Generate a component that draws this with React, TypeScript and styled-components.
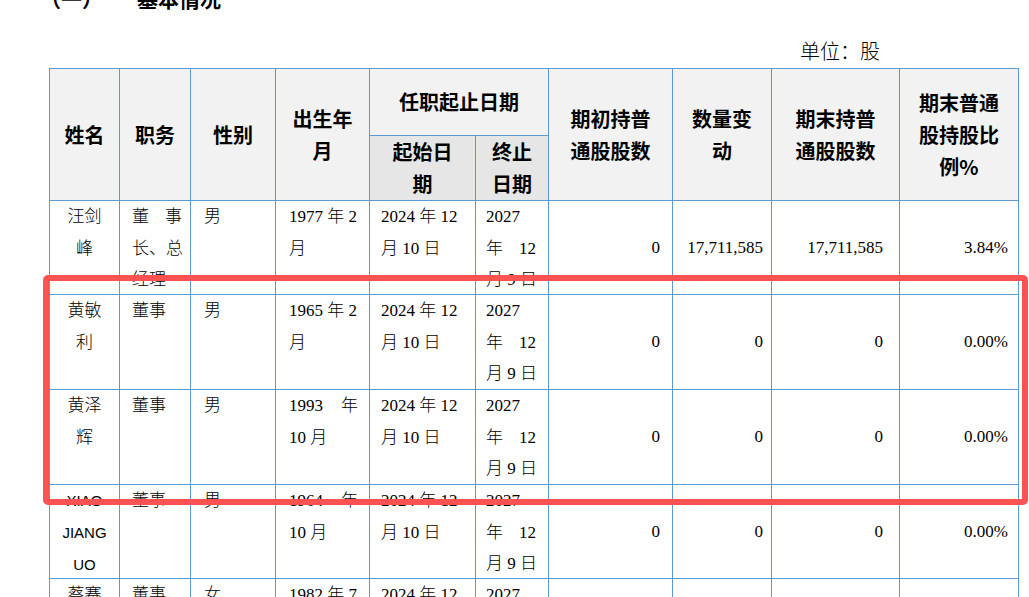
import React from "react";
import styled, { createGlobalStyle } from "styled-components";

const GlobalStyle = createGlobalStyle`
  html, body { margin: 0; padding: 0; background: #fff; }
  body {
    font-family: "Liberation Serif", "Noto Sans CJK SC", serif;
    color: #000;
    overflow: hidden;
  }
`;

const Page = styled.div`
  position: relative;
  width: 1029px;
  height: 597px;
  overflow: hidden;
`;

const Heading = styled.h2`
  margin: -17px 0 0 0;
  padding-left: 40px;
  height: 30px;
  display: flex;
  gap: 34px;
  font: 700 21px/30px "Noto Sans CJK SC", sans-serif;
`;

const Unit = styled.div`
  margin-top: 24px;
  height: 30px;
  padding-right: 149px;
  text-align: right;
  font: 300 20px/30px "Liberation Serif", "Noto Sans CJK SC", serif;
`;

const TableWrap = styled.div`
  padding-left: 49px;
  margin-top: 1px;
`;

const Table = styled.table`
  border-collapse: collapse;
  table-layout: fixed;
  width: 969px;
`;

const HeadCell = styled.th<{ $shade?: boolean }>`
  border: 1px solid #5b9bd5;
  background: ${(p) => (p.$shade ? "#e6e6e6" : "#f2f2f2")};
  font: 700 20px/32px "Noto Sans CJK SC", sans-serif;
  text-align: center;
  vertical-align: middle;
  padding: 0;
`;

const HeadRow = styled.tr<{ $h: number }>`
  height: ${(p) => p.$h}px;
`;

const BodyRow = styled.tr<{ $h: number }>`
  height: ${(p) => p.$h}px;
`;

const BodyCell = styled.td<{
  $align: "left" | "center" | "right";
  $valign: "top" | "middle";
  $pl: number;
  $pr: number;
}>`
  border: 1px solid #5b9bd5;
  padding: 0 ${(p) => p.$pr}px 0 ${(p) => p.$pl}px;
  font: 300 17px/31.5px "Liberation Serif", "Noto Sans CJK SC", serif;
  text-align: ${(p) => p.$align};
  vertical-align: ${(p) => p.$valign};
  white-space: nowrap;
  overflow: hidden;
`;

const CellBox = styled.div<{ $max: number }>`
  max-height: ${(p) => p.$max}px;
  overflow: hidden;
`;

const Line = styled.div`
  white-space: nowrap;
`;

const JustifyLine = styled.div`
  display: flex;
  justify-content: space-between;
  white-space: nowrap;
`;

const Latin = styled.div`
  font: 400 15px/32px "Liberation Sans", sans-serif;
`;

const Highlight = styled.div`
  position: absolute;
  left: 43px;
  top: 275px;
  width: 985px;
  height: 230px;
  box-sizing: border-box;
  border: 6px solid #fc5252;
  border-radius: 5px;
  pointer-events: none;
`;

type L = string | { t: string; j: true };
const J = (t: string): L => ({ t, j: true });

type Row = {
  h: number;
  name: L[];
  latin?: boolean;
  duty: L[];
  sex: string;
  birth: L[];
  start: L[];
  end: L[];
  a: string;
  b: string;
  c: string;
  d: string;
};

const endDate: L[] = ["2027", J("年 12"), "月 9 日"];
const startDate: L[] = ["2024 年 12", "月 10 日"];

const rows: Row[] = [
  {
    h: 94,
    name: ["汪剑", "峰"],
    duty: [J("董 事"), J("长 、 总"), "经理"],
    sex: "男",
    birth: ["1977 年 2", "月"],
    start: startDate,
    end: endDate,
    a: "0",
    b: "17,711,585",
    c: "17,711,585",
    d: "3.84%",
  },
  {
    h: 95,
    name: ["黄敏", "利"],
    duty: ["董事"],
    sex: "男",
    birth: ["1965 年 2", "月"],
    start: startDate,
    end: endDate,
    a: "0",
    b: "0",
    c: "0",
    d: "0.00%",
  },
  {
    h: 95,
    name: ["黄泽", "辉"],
    duty: ["董事"],
    sex: "男",
    birth: [J("1993 年"), "10 月"],
    start: startDate,
    end: endDate,
    a: "0",
    b: "0",
    c: "0",
    d: "0.00%",
  },
  {
    h: 94,
    name: ["XIAO", "JIANG", "UO"],
    latin: true,
    duty: ["董事"],
    sex: "男",
    birth: [J("1964 年"), "10 月"],
    start: startDate,
    end: endDate,
    a: "0",
    b: "0",
    c: "0",
    d: "0.00%",
  },
  {
    h: 95,
    name: ["蔡赛", "男"],
    duty: ["董事、", "副总"],
    sex: "女",
    birth: ["1982 年 7", "月"],
    start: startDate,
    end: endDate,
    a: "0",
    b: "0",
    c: "0",
    d: "0.00%",
  },
];

const Lines: React.FC<{ lines: L[]; latin?: boolean; max: number }> = ({ lines, latin, max }) => (
  <CellBox $max={max}>
    {lines.map((l, i) =>
      typeof l === "string" ? (
        latin ? (
          <Latin key={i}>{l}</Latin>
        ) : (
          <Line key={i}>{l}</Line>
        )
      ) : (
        <JustifyLine key={i}>
          {l.t.split(" ").map((w, k) => (
            <span key={k}>{w}</span>
          ))}
        </JustifyLine>
      )
    )}
  </CellBox>
);

const widths = [70, 71, 85, 94, 106, 73, 124, 99, 128, 119];

export default function App() {
  return (
    <Page>
      <GlobalStyle />
      <Heading>
        <span>（一）</span>
        <span>基本情况</span>
      </Heading>
      <Unit>单位：股</Unit>
      <TableWrap>
        <Table>
          <colgroup>
            {widths.map((w, i) => (
              <col key={i} style={{ width: w }} />
            ))}
          </colgroup>
          <thead>
            <HeadRow $h={67}>
              <HeadCell rowSpan={2}>姓名</HeadCell>
              <HeadCell rowSpan={2}>职务</HeadCell>
              <HeadCell rowSpan={2}>性别</HeadCell>
              <HeadCell rowSpan={2}>
                出生年
                <br />月
              </HeadCell>
              <HeadCell colSpan={2}>任职起止日期</HeadCell>
              <HeadCell rowSpan={2}>
                期初持普
                <br />
                通股股数
              </HeadCell>
              <HeadCell rowSpan={2}>
                数量变
                <br />动
              </HeadCell>
              <HeadCell rowSpan={2}>
                期末持普
                <br />
                通股股数
              </HeadCell>
              <HeadCell rowSpan={2}>
                期末普通
                <br />
                股持股比
                <br />
                例%
              </HeadCell>
            </HeadRow>
            <HeadRow $h={63}>
              <HeadCell $shade>
                起始日
                <br />期
              </HeadCell>
              <HeadCell $shade>
                终止
                <br />
                日期
              </HeadCell>
            </HeadRow>
          </thead>
          <tbody>
            {rows.map((r, i) => {
              const max = r.h - 1;
              return (
                <BodyRow key={i} $h={r.h}>
                  <BodyCell $align="center" $valign="top" $pl={6} $pr={6}>
                    <Lines lines={r.name} latin={r.latin} max={max} />
                  </BodyCell>
                  <BodyCell $align="left" $valign="top" $pl={12} $pr={8}>
                    <Lines lines={r.duty} max={max} />
                  </BodyCell>
                  <BodyCell $align="left" $valign="top" $pl={13} $pr={8}>
                    <Lines lines={[r.sex]} max={max} />
                  </BodyCell>
                  <BodyCell $align="left" $valign="top" $pl={13} $pr={11}>
                    <Lines lines={r.birth} max={max} />
                  </BodyCell>
                  <BodyCell $align="left" $valign="top" $pl={11} $pr={6}>
                    <Lines lines={r.start} max={max} />
                  </BodyCell>
                  <BodyCell $align="left" $valign="top" $pl={10} $pr={12}>
                    <Lines lines={r.end} max={max} />
                  </BodyCell>
                  <BodyCell $align="right" $valign="middle" $pl={6} $pr={12}>
                    {r.a}
                  </BodyCell>
                  <BodyCell $align="right" $valign="middle" $pl={4} $pr={8}>
                    {r.b}
                  </BodyCell>
                  <BodyCell $align="right" $valign="middle" $pl={6} $pr={16}>
                    {r.c}
                  </BodyCell>
                  <BodyCell $align="right" $valign="middle" $pl={6} $pr={10}>
                    {r.d}
                  </BodyCell>
                </BodyRow>
              );
            })}
          </tbody>
        </Table>
      </TableWrap>
      <Highlight />
    </Page>
  );
}
